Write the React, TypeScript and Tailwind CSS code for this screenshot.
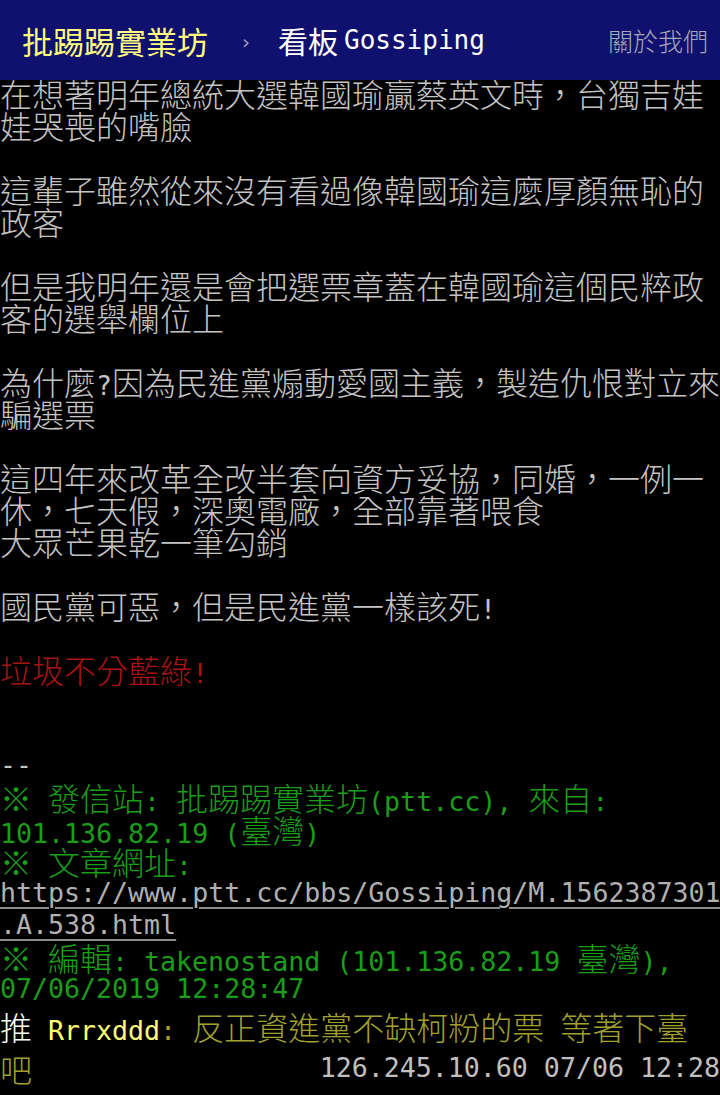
import React from "react";

const mono = "font-['DejaVu_Sans_Mono',monospace] text-[26.6px]";
const cjk = "font-['Noto_Sans_CJK_TC',sans-serif] font-light text-[32px]";

function Mixed({ text }: { text: string }) {
  const parts = text.match(/[\x00-\x7f]+|[^\x00-\x7f]+/g) ?? [];
  return (
    <>
      {parts.map((p, i) =>
        /^[\x00-\x7f]/.test(p) ? (
          <span key={i} className={mono}>{p}</span>
        ) : (
          <span key={i} className={cjk}>{p}</span>
        )
      )}
    </>
  );
}

function Line({ text = "", color = "text-[#c4c4c4]", children }: { text?: string; color?: string; children?: React.ReactNode }) {
  return (
    <div className={`h-[32px] leading-[32px] whitespace-pre ${color}`}>
      {children ?? <Mixed text={text} />}
    </div>
  );
}

const body: string[] = [
  "在想著明年總統大選韓國瑜贏蔡英文時，台獨吉娃",
  "娃哭喪的嘴臉",
  "",
  "這輩子雖然從來沒有看過像韓國瑜這麼厚顏無恥的",
  "政客",
  "",
  "但是我明年還是會把選票章蓋在韓國瑜這個民粹政",
  "客的選舉欄位上",
  "",
  "為什麼?因為民進黨煽動愛國主義，製造仇恨對立來",
  "騙選票",
  "",
  "這四年來改革全改半套向資方妥協，同婚，一例一",
  "休，七天假，深奧電廠，全部靠著喂食",
  "大眾芒果乾一筆勾銷",
  "",
  "國民黨可惡，但是民進黨一樣該死!",
  "",
];

export default function App() {
  return (
    <div className="w-[720px] h-[1095px] overflow-hidden bg-black">
      <header className="h-[80px] bg-[#10106e] flex items-center pl-[22px] pr-[12px]">
        <span className="font-['Noto_Sans_CJK_TC',sans-serif] text-[31px] text-[#ffff80] leading-none">批踢踢實業坊</span>
        <span className="ml-[34px] mt-[4px] font-['DejaVu_Sans',sans-serif] text-[20px] text-[#9a9ab8] leading-none">›</span>
        <span className="ml-[28px] text-white leading-none flex items-center">
          <span className="font-['Noto_Sans_CJK_TC',sans-serif] text-[30px]">看板</span>
          <span className="ml-[6px] font-['DejaVu_Sans_Mono',monospace] text-[26px]">Gossiping</span>
        </span>
        <span className="ml-auto font-['Noto_Sans_CJK_TC',sans-serif] font-light text-[25px] text-[#a8a8b8] leading-none">關於我們</span>
      </header>
      <main className="-mt-[3px]">
        {body.map((t, i) => (
          <Line key={i} text={t} />
        ))}
        <Line text="垃圾不分藍綠!" color="text-[#a81414]" />
        <Line />
        <Line />
        <Line text="--" />
        <Line text="※ 發信站: 批踢踢實業坊(ptt.cc), 來自:" color="text-[#1a9e1a]" />
        <Line text="101.136.82.19 (臺灣)" color="text-[#1a9e1a]" />
        <Line text="※ 文章網址:" color="text-[#1a9e1a]" />
        <Line color="text-[#b0b0b0]">
          <span className="underline decoration-2 underline-offset-[5px] decoration-[#8c8c8c]">
            <Mixed text="https://www.ptt.cc/bbs/Gossiping/M.1562387301" />
          </span>
        </Line>
        <Line color="text-[#b0b0b0]">
          <span className="underline decoration-2 underline-offset-[5px] decoration-[#8c8c8c]">
            <Mixed text=".A.538.html" />
          </span>
        </Line>
        <Line text="※ 編輯: takenostand (101.136.82.19 臺灣)," color="text-[#1a9e1a]" />
        <Line text="07/06/2019 12:28:47" color="text-[#1a9e1a]" />
        <div className="leading-[42px] whitespace-pre">
          <div className="h-[42px]">
            <span className="text-white">
              <Mixed text="推 " />
            </span>
            <span className="text-[#ffff70]">
              <Mixed text="Rrrxddd" />
            </span>
            <span className="text-[#a0a030]">
              <Mixed text=": 反正資進黨不缺柯粉的票 等著下臺" />
            </span>
          </div>
          <div className="h-[42px] flex justify-between">
            <span className="text-[#a0a030]">
              <Mixed text="吧" />
            </span>
            <span className="text-[#c0c0c0]">
              <Mixed text="126.245.10.60 07/06 12:28" />
            </span>
          </div>
        </div>
      </main>
    </div>
  );
}
